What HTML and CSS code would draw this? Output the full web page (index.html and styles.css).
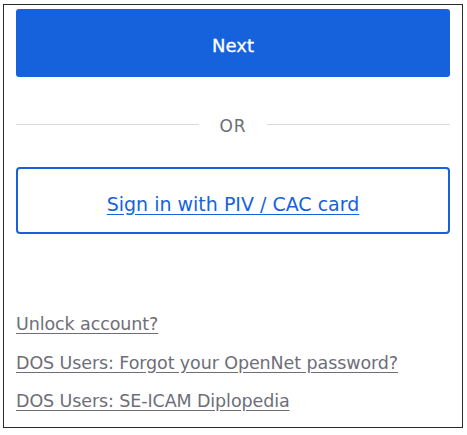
FILE: index.html
```html
<!DOCTYPE html>
<html>
<head>
<meta charset="utf-8">
<link rel="stylesheet" href="styles.css">
</head>
<body>
<div class="frame">
  <button class="btn-primary">Next</button>
  <div class="divider">
    <span class="line"></span>
    <span class="or">OR</span>
    <span class="line"></span>
  </div>
  <a class="btn-piv" href="#"><span>Sign in with PIV / CAC card</span></a>
  <ul class="links">
    <li><a href="#">Unlock account?</a></li>
    <li><a href="#">DOS Users: Forgot your OpenNet password?</a></li>
    <li><a href="#">DOS Users: SE-ICAM Diplopedia</a></li>
  </ul>
</div>
</body>
</html>
```
FILE: styles.css
```css
html, body {
  margin: 0;
  padding: 0;
  background: #fff;
}
body {
  font-family: "DejaVu Sans", "Open Sans", sans-serif;
  padding: 4px 4px 0 3px;
}
.frame {
  box-sizing: border-box;
  width: 460px;
  height: 424px;
  border: 1px solid #2b2b2b;
  padding: 4px 12px 0 12px;
  display: flex;
  flex-direction: column;
}
.btn-primary {
  display: block;
  width: 100%;
  height: 68px;
  flex: none;
  border: none;
  border-radius: 3px;
  background: #1662dd;
  color: #fff;
  font-family: inherit;
  font-size: 18px;
  font-weight: 500;
  padding: 4px 0 0 0;
  cursor: pointer;
  -webkit-text-stroke: 0.3px #fff;
}
.divider {
  display: flex;
  align-items: center;
  margin-top: 36px;
  height: 22px;
  flex: none;
}
.divider .line {
  flex: 1;
  height: 1px;
  background: #d9d9de;
}
.divider .or {
  padding: 3px 20px 0 20px;
  font-size: 17px;
  color: #6e6e78;
  letter-spacing: 1px;
}
.btn-piv {
  margin-top: 32px;
  box-sizing: border-box;
  height: 67px;
  flex: none;
  border: 2px solid #1662dd;
  border-radius: 4px;
  padding-top: 6px;
  display: flex;
  align-items: center;
  justify-content: center;
  color: #1662dd;
  font-size: 19px;
  text-decoration: underline;
  text-underline-offset: 3px;
}
.links {
  list-style: none;
  margin: 80px 0 0 0;
  padding: 0;
  display: flex;
  flex-direction: column;
  gap: 17.5px;
}
.links a {
  color: #6e6e78;
  font-size: 17.5px;
  letter-spacing: -0.1px;
  line-height: 21px;
  text-decoration: underline;
  text-underline-offset: 3px;
}
```
